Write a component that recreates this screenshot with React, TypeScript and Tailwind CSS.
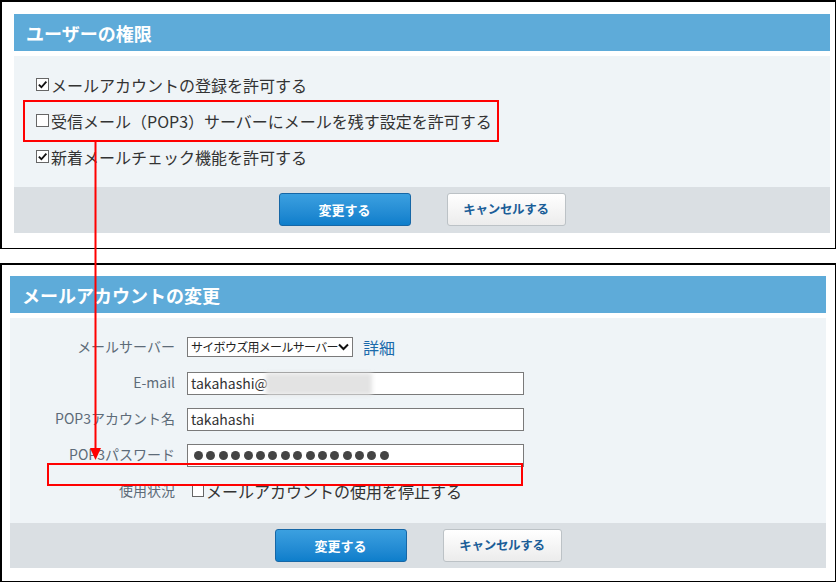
import React from "react";

const FONT = { fontFamily: '"Noto Sans CJK JP", "Noto Sans", sans-serif' };

function Box({ checked, size = 13 }: { checked: boolean; size?: number }) {
  return (
    <span
      className="inline-flex items-center justify-center border border-[#666] bg-white shrink-0"
      style={{ width: size, height: size }}
    >
      {checked && (
        <svg viewBox="0 0 12 12" width={size - 2} height={size - 2}>
          <path d="M2 6.2 L4.8 9 L10.2 2.8" fill="none" stroke="#111" strokeWidth="2" />
        </svg>
      )}
    </span>
  );
}

function Row({ checked, children }: { checked: boolean; children: React.ReactNode }) {
  return (
    <div className="h-[36px] flex items-center gap-[2px] text-[16px] text-[#333] leading-none pb-[1px]">
      <Box checked={checked} />
      <span>{children}</span>
    </div>
  );
}

function Buttons() {
  return (
    <div className="flex items-center justify-center gap-[36px]">
      <div className="w-[132px] h-[33px] rounded-[3px] border border-[#1667a6] bg-gradient-to-b from-[#3ba0e0] to-[#0d7ecb] flex items-center justify-center text-white font-bold text-[13px]">
        変更する
      </div>
      <div className="w-[119px] h-[33px] rounded-[3px] border border-[#bcc2c6] bg-gradient-to-b from-white to-[#ececec] flex items-center justify-center text-[#1b5e98] font-bold text-[12.5px] tracking-[-0.3px]">
        キャンセルする
      </div>
    </div>
  );
}

function FormRow({ label, children }: { label: string; children: React.ReactNode }) {
  return (
    <div className="h-[36px] flex items-center">
      <div className="w-[165px] text-right text-[14px] text-[#5d6b78] leading-none pb-[2px]">{label}</div>
      <div className="ml-[12px] flex items-center">{children}</div>
    </div>
  );
}

function TextInput({ children }: { children?: React.ReactNode }) {
  return (
    <div className="relative w-[337px] h-[23px] border border-[#7a7a7a] bg-white flex items-center pl-[3px] text-[14px] text-[#333] leading-none">
      {children}
    </div>
  );
}

export default function App() {
  const dots = Array.from({ length: 16 });
  return (
    <div className="relative w-[837px] h-[582px] bg-white overflow-hidden" style={FONT}>
      {/* Panel 1 */}
      <section className="w-[836px] h-[249px] border-l-2 border-t-2 border-r border-b border-black pt-[12px] pl-[12px] pr-[5px]">
        <div className="h-[37px] bg-[#5eabd9] flex items-center pl-[12px] text-white font-bold text-[18px] leading-none">
          ユーザーの権限
        </div>
        <div className="mt-[5px] h-[131px] bg-[#eff4f7] pl-[22px] pt-[11px]">
          <Row checked>メールアカウントの登録を許可する</Row>
          <Row checked={false}>受信メール（POP3）サーバーにメールを残す設定を許可する</Row>
          <Row checked>新着メールチェック機能を許可する</Row>
        </div>
        <div className="h-[46px] bg-[#dadfe3] flex items-center justify-center pb-[1px]">
          <Buttons />
        </div>
      </section>

      {/* Panel 2 */}
      <section className="mt-[14px] w-[836px] h-[319px] border-l-2 border-t-2 border-r border-b border-black pt-[11px] pl-[8px] pr-[9px]">
        <div className="h-[37px] bg-[#5eabd9] flex items-center pl-[12px] text-white font-bold text-[18px] leading-none">
          メールアカウントの変更
        </div>
        <div className="mt-[5px] h-[205px] bg-[#eff4f7] pt-[11px]">
          <FormRow label="メールサーバー">
            <div className="w-[166px] h-[20px] border border-[#7a7a7a] bg-white flex items-center justify-between pl-[3px] pr-[5px] text-[12px] text-[#222] leading-none tracking-[-0.7px] whitespace-nowrap overflow-hidden">
              <span>サイボウズ用メールサーバー</span>
              <svg width="11" height="8" viewBox="0 0 11 8" className="shrink-0">
                <path d="M1 1.5 L5.5 6 L10 1.5" fill="none" stroke="#111" strokeWidth="2" />
              </svg>
            </div>
            <span className="ml-[10px] text-[16px] text-[#1a6aab] leading-none">詳細</span>
          </FormRow>
          <FormRow label="E-mail">
            <TextInput>
              <span>takahashi@</span>
              <div className="absolute left-[78px] top-[0px] w-[106px] h-[22px] bg-[#e3e3e3] blur-[2px]" />
            </TextInput>
          </FormRow>
          <FormRow label="POP3アカウント名">
            <TextInput>takahashi</TextInput>
          </FormRow>
          <FormRow label="POP3パスワード">
            <TextInput>
              <div className="flex items-center gap-[3.4px] pl-[3px]">
                {dots.map((_, i) => (
                  <span key={i} className="w-[9px] h-[9px] rounded-full bg-[#444]" />
                ))}
              </div>
            </TextInput>
          </FormRow>
          <FormRow label="使用状況">
            <div className="flex items-center gap-[2px] pl-[5px] text-[16px] text-[#333] leading-none">
              <Box checked={false} size={12} />
              <span>メールアカウントの使用を停止する</span>
            </div>
          </FormRow>
        </div>
        <div className="h-[45px] bg-[#dadfe3] flex items-center justify-center">
          <Buttons />
        </div>
      </section>

      {/* Red annotation overlay */}
      <div className="absolute left-[23px] top-[100px] w-[476px] h-[42px] border-2 border-[#f00]" />
      <div className="absolute left-[47px] top-[463px] w-[476px] h-[23px] border-2 border-[#f00]" />
      <svg className="absolute left-0 top-0" width="837" height="582" viewBox="0 0 837 582">
        <line x1="95.5" y1="141" x2="95.5" y2="452" stroke="#f00" strokeWidth="2" />
        <polygon points="90,448 101,448 95.5,460" fill="#f00" />
      </svg>
    </div>
  );
}
